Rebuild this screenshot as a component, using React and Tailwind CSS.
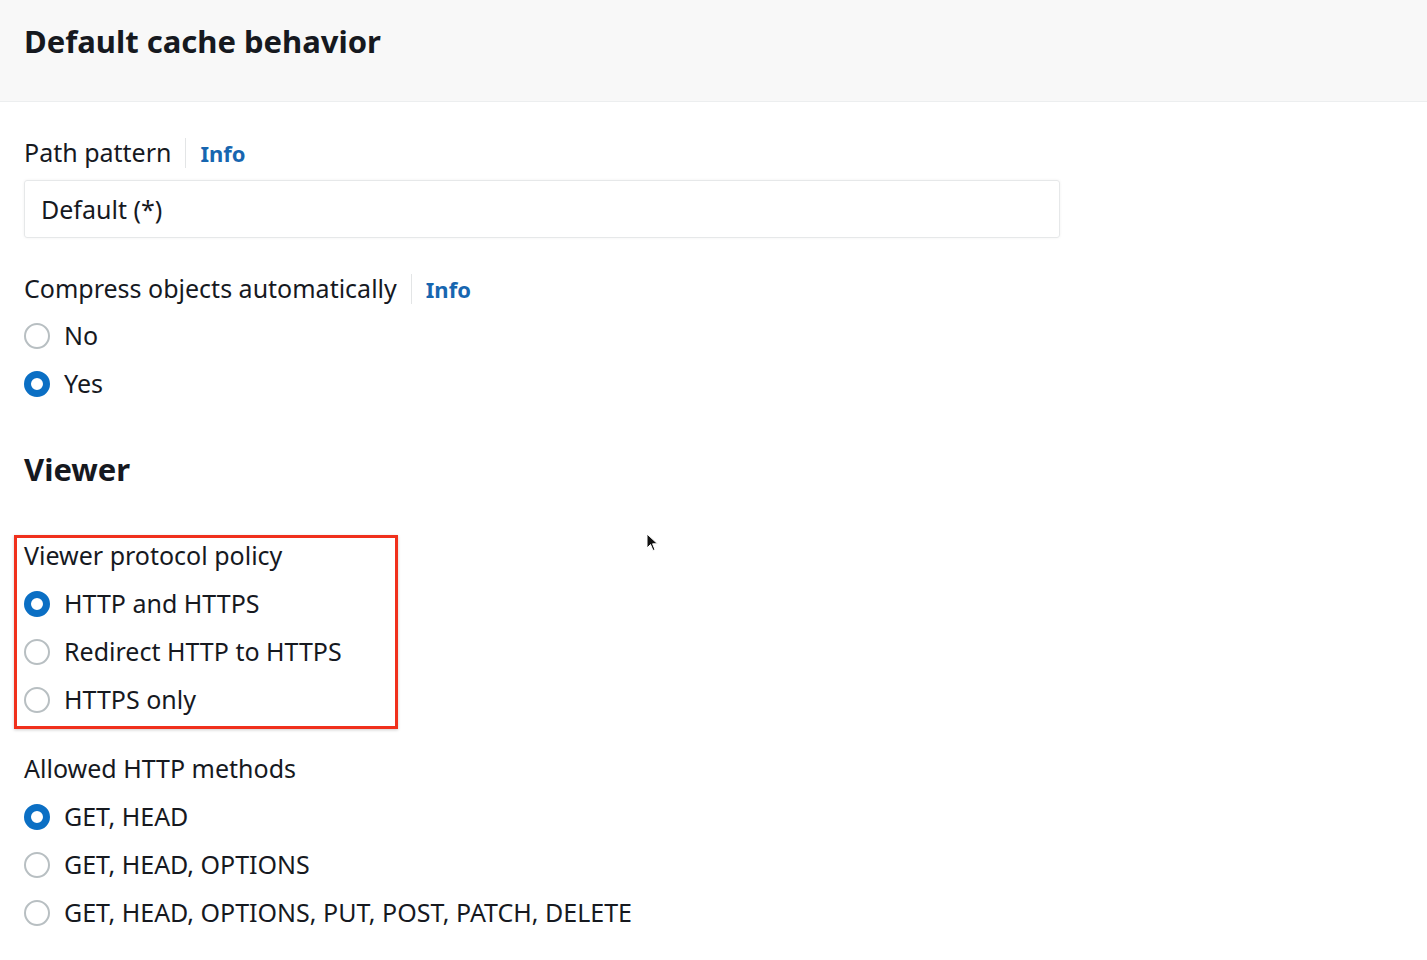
import React from "react";

const font = { fontFamily: '"Noto Sans", "Open Sans", Arial, sans-serif' };

const Radio = ({ checked, label }) => (
  <label className="flex items-center h-[48px] gap-[14px] cursor-pointer">
    {checked ? (
      <span className="w-[26px] h-[26px] rounded-full border-[7px] border-[#0b6fc4] bg-white shrink-0" />
    ) : (
      <span className="w-[26px] h-[26px] rounded-full border-2 border-[#b8bfc2] bg-white shrink-0" />
    )}
    <span className="text-[25px] text-[#16191f] leading-[30px] pb-[3px]">{label}</span>
  </label>
);

const Label = ({ children, info }) => (
  <div className="flex items-center h-[32px] text-[25px] text-[#16191f]">
    <span>{children}</span>
    {info && (
      <>
        <span className="ml-[14px] mr-[14px] w-px h-[30px] bg-[#e3e5e6]" />
        <span className="text-[22px] font-bold text-[#1766b0]">Info</span>
      </>
    )}
  </div>
);

export default function App() {
  return (
    <div className="relative w-[1427px] h-[960px] bg-white overflow-hidden" style={font}>
      {/* header */}
      <div className="h-[102px] bg-[#f8f8f8] border-b border-[#eceeef] pl-[24px] pt-[21px]">
        <h2 className="text-[31px] font-bold text-[#16191f] leading-[40px]">Default cache behavior</h2>
      </div>

      <div className="pl-[24px]">
        <div className="mt-[35px]">
          <Label info>Path pattern</Label>
        </div>
        <div className="mt-[11px] w-[1036px] h-[58px] border border-[#e6e8e9] rounded-[3px] shadow-[0_0_3px_rgba(0,0,0,0.06)] flex items-center pl-[16px] pt-[1px] text-[25px] text-[#16191f]">
          Default (*)
        </div>

        <div className="mt-[35px]">
          <Label info>Compress objects automatically</Label>
        </div>
        <div className="mt-[7px] flex flex-col">
          <Radio label="No" />
          <Radio checked label="Yes" />
        </div>

        <h3 className="mt-[41px] text-[31px] font-bold text-[#16191f] leading-[40px]">Viewer</h3>

        <div className="mt-[46px] -ml-[10px] w-[384px] border-[3px] border-[#f0301c] pl-[7px] pt-[2px] pb-[2px] shadow-[0_1px_3px_rgba(0,0,0,0.2)]">
          <Label>Viewer protocol policy</Label>
          <div className="mt-[8px] flex flex-col">
            <Radio checked label="HTTP and HTTPS" />
            <Radio label="Redirect HTTP to HTTPS" />
            <Radio label="HTTPS only" />
          </div>
        </div>

        <div className="mt-[24px]">
          <Label>Allowed HTTP methods</Label>
        </div>
        <div className="mt-[8px] flex flex-col">
          <Radio checked label="GET, HEAD" />
          <Radio label="GET, HEAD, OPTIONS" />
          <Radio label="GET, HEAD, OPTIONS, PUT, POST, PATCH, DELETE" />
        </div>
      </div>

      {/* mouse cursor */}
      <svg className="absolute left-[646px] top-[533px]" width="14" height="20" viewBox="0 0 14 20">
        <path d="M1 1 L1 15 L4.5 11.5 L7 17.5 L9 16.7 L6.6 10.8 L11.5 10.8 Z" fill="#111" stroke="#fff" strokeWidth="1" />
      </svg>
    </div>
  );
}
